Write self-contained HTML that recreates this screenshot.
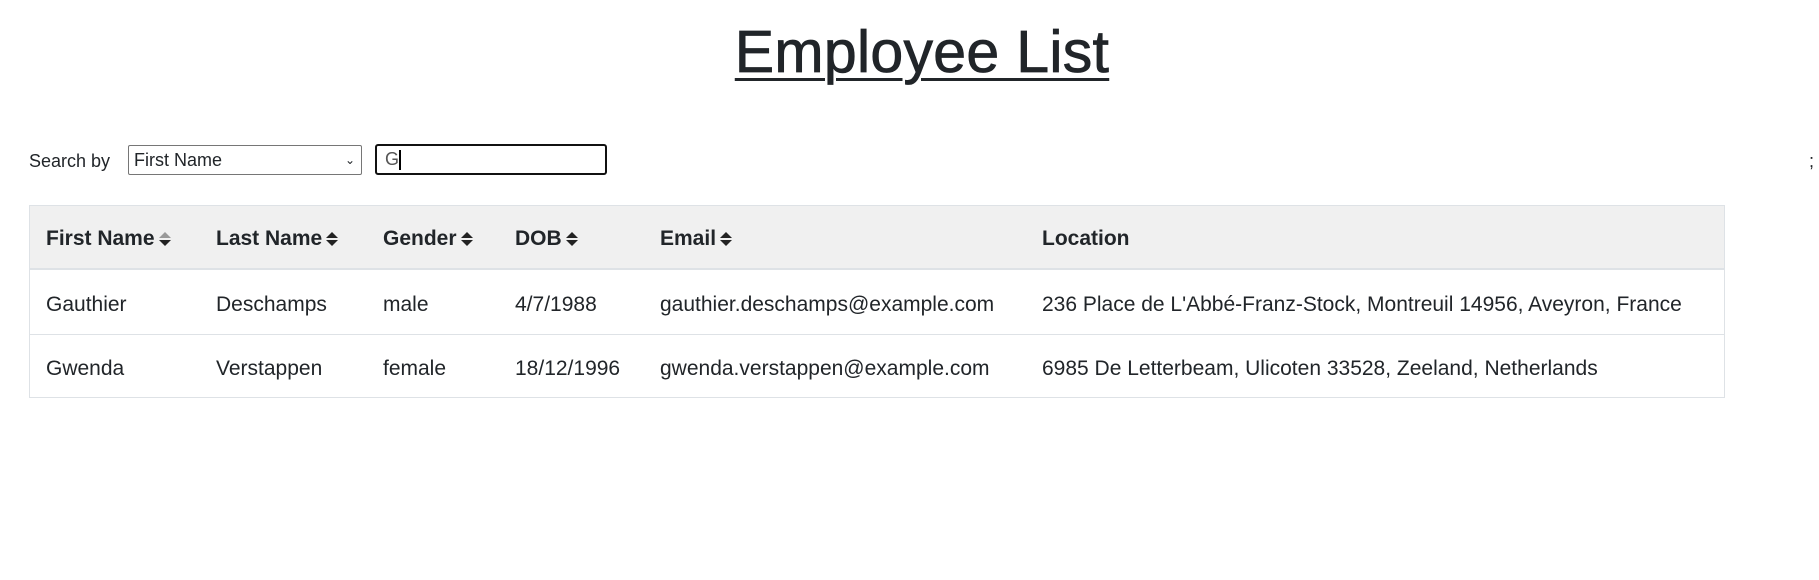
<!DOCTYPE html>
<html><head><style>
body{margin:0;width:1819px;height:580px;background:#fff;font-family:"Liberation Sans",sans-serif;color:#212529;position:relative;overflow:hidden}
.a{position:absolute;white-space:nowrap}
h1{position:absolute;left:0;width:1844px;text-align:center;top:18px;margin:0;font-size:59px;font-weight:normal;letter-spacing:0.3px;text-decoration:underline;text-decoration-thickness:3px;text-underline-offset:6px;-webkit-text-stroke:0.8px #212529}
.tbl{position:absolute;left:29px;top:205px;width:1696px;height:193px;border:1px solid #dee2e6;box-sizing:border-box}
.hd{position:absolute;left:0;top:0;width:100%;height:64px;background:#f0f0f0;border-bottom:2px solid #dee2e6;box-sizing:border-box}
.ln{position:absolute;left:0;width:100%;top:128px;border-top:1px solid #dee2e6}
.h{font-weight:bold;font-size:21px;top:227px}
.c1{top:293px;font-size:21px}
.c2{top:357px;font-size:21px}
.s{display:inline-block;vertical-align:middle;margin-left:2px}
</style></head><body>
<h1>Employee List</h1>
<div class="a" style="left:29px;top:151px;font-size:18px">Search by</div>
<div class="a" style="left:128px;top:145px;width:234px;height:30px;border:1px solid #767676;box-sizing:border-box;border-radius:2px;font-size:18px;line-height:28px;padding-left:5px">First Name<span style="position:absolute;right:6px;top:0;font-size:12px">&#8964;</span></div>
<div class="a" style="left:375px;top:144px;width:232px;height:31px;border:2px solid #111;box-sizing:border-box;border-radius:3px;font-size:18px;line-height:27px;padding-left:8px;color:#555">G<span style="display:inline-block;width:2px;height:20px;background:#000;vertical-align:middle"></span></div>
<div class="a" style="left:1809px;top:151px;font-size:18px">;</div>
<div class="tbl"><div class="hd"></div><div class="ln"></div></div>
<div class="a h" style="left:46px">First Name<svg class="s" width="16" height="18" viewBox="0 0 16 18"><path d="M2 8L8 2L14 8Z" fill="#999"/><path d="M2 10L8 16L14 10Z" fill="#222"/></svg></div>
<div class="a h" style="left:216px">Last Name<svg class="s" width="16" height="18" viewBox="0 0 16 18"><path d="M2 8L8 2L14 8Z" fill="#222"/><path d="M2 10L8 16L14 10Z" fill="#222"/></svg></div>
<div class="a h" style="left:383px">Gender<svg class="s" width="16" height="18" viewBox="0 0 16 18"><path d="M2 8L8 2L14 8Z" fill="#222"/><path d="M2 10L8 16L14 10Z" fill="#222"/></svg></div>
<div class="a h" style="left:515px">DOB<svg class="s" width="16" height="18" viewBox="0 0 16 18"><path d="M2 8L8 2L14 8Z" fill="#222"/><path d="M2 10L8 16L14 10Z" fill="#222"/></svg></div>
<div class="a h" style="left:660px">Email<svg class="s" width="16" height="18" viewBox="0 0 16 18"><path d="M2 8L8 2L14 8Z" fill="#222"/><path d="M2 10L8 16L14 10Z" fill="#222"/></svg></div>
<div class="a h" style="left:1042px">Location</div>
<div class="a c1" style="left:46px">Gauthier</div>
<div class="a c1" style="left:216px">Deschamps</div>
<div class="a c1" style="left:383px">male</div>
<div class="a c1" style="left:515px">4/7/1988</div>
<div class="a c1" style="left:660px">gauthier.deschamps@example.com</div>
<div class="a c1" style="left:1042px">236 Place de L'Abbé-Franz-Stock, Montreuil 14956, Aveyron, France</div>
<div class="a c2" style="left:46px">Gwenda</div>
<div class="a c2" style="left:216px">Verstappen</div>
<div class="a c2" style="left:383px">female</div>
<div class="a c2" style="left:515px">18/12/1996</div>
<div class="a c2" style="left:660px">gwenda.verstappen@example.com</div>
<div class="a c2" style="left:1042px">6985 De Letterbeam, Ulicoten 33528, Zeeland, Netherlands</div>
</body></html>
